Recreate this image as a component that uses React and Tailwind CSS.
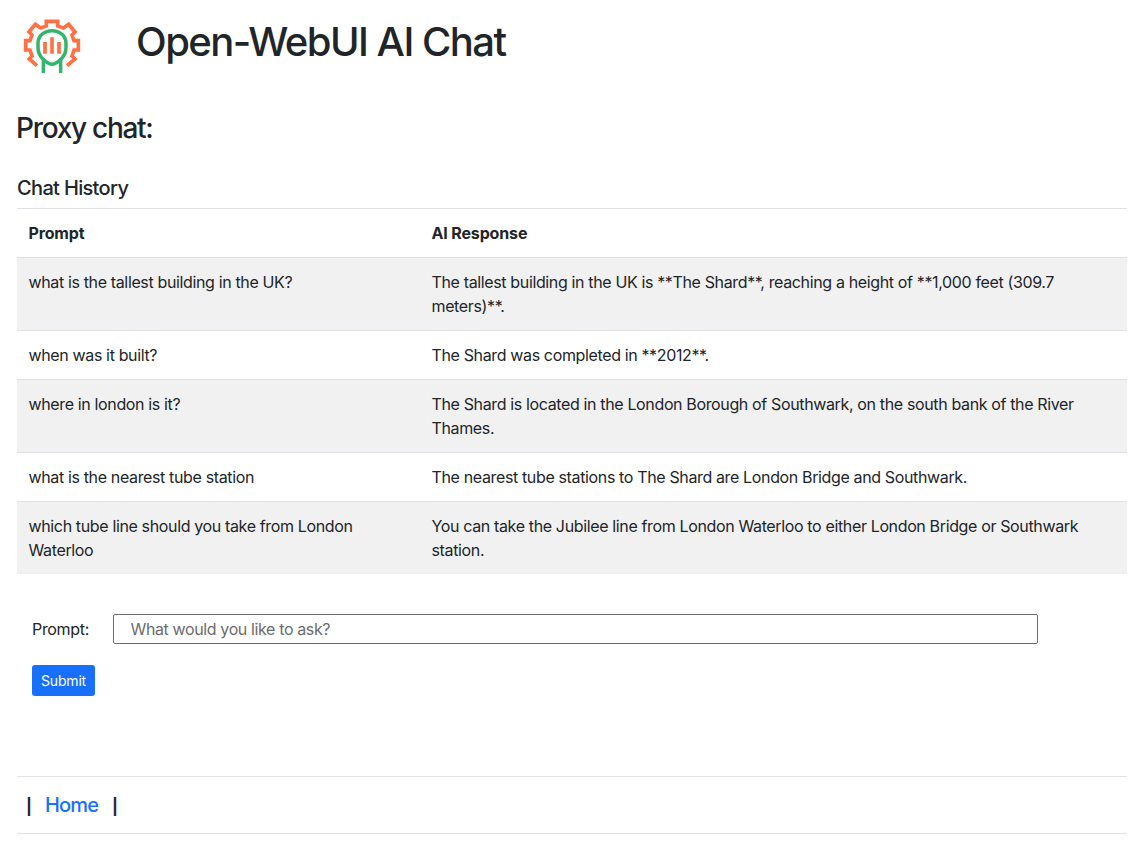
const rows = [
  ['what is the tallest building in the UK?', ['The tallest building in the UK is **The Shard**, reaching a height of **1,000 feet (309.7', 'meters)**.']],
  ['when was it built?', ['The Shard was completed in **2012**.']],
  ['where in london is it?', ['The Shard is located in the London Borough of Southwark, on the south bank of the River', 'Thames.']],
  ['what is the nearest tube station', ['The nearest tube stations to The Shard are London Bridge and Southwark.']],
  ['which tube line should you take from London Waterloo', ['You can take the Jubilee line from London Waterloo to either London Bridge or Southwark', 'station.']],
];

function Logo() {
  return (
    <svg className="ml-[3px] h-16 w-16 shrink-0" viewBox="30 12 192 192" fill="none">
      <g stroke="#ff7043" strokeWidth="11">
        <path d="M81 167L58 147L66 138L60 120H47V92H60L66 75L57 66L76 43L92 54L109 48V34H143V48L160 54L176 43L195 66L186 75L192 92H205V120H192L186 138L195 147L171 167" />
        <path d="M105 96V131M126 82V131M147 96V131" />
      </g>
      <path d="M126 62C103 62 84 77 84 99V112C84 122 87 134 95 143C104 152 113 163 126 163C139 163 148 152 157 143C165 134 168 122 168 112V99C168 77 149 62 126 62ZM100 146V189M152 146V189" stroke="#35b46e" strokeWidth="10.500" />
    </svg>
  );
}

export default function App() {
  return (
    <div className="min-h-[853px] bg-white pr-3.5 pl-[17px] font-['Inter',sans-serif] text-base leading-6 tracking-[-0.0225em] text-[#212529]">
      <header className="flex h-[84px] pt-3.5">
        <Logo />
        <h1 className="ml-[52px] pt-1 text-[40px] leading-12 font-medium tracking-[-0.038em] whitespace-nowrap">Open-WebUI AI Chat</h1>
      </header>
      <h2 className="-ml-px pt-[27px] text-[28px] leading-[34px] font-medium tracking-[-0.046em]"><span>Proxy chat:</span></h2>
      <h3 className="pt-[31px] pb-2 text-xl leading-6 font-medium tracking-[-0.033em]"><span>Chat History</span></h3>
      <table className="w-full table-fixed border-collapse border-t border-[#dee2e6]">
        <colgroup>
          <col className="w-[403px]" />
          <col />
        </colgroup>
        <thead>
          <tr className="border-b border-[#dee2e6] text-left">
            <th className="px-[11.5px] py-3 font-bold tracking-[-0.009em]"><span>Prompt</span></th>
            <th className="px-[11.5px] py-3 font-bold tracking-[-0.009em]"><span>AI Response</span></th>
          </tr>
        </thead>
        <tbody>
          {rows.map(([prompt, lines]) => (
            <tr key={prompt} className="border-b border-[#dee2e6] align-top last:border-b-0 odd:bg-[#f1f1f1]">
              <td className="px-[11.5px] py-3"><span>{prompt}</span></td>
              <td className="px-[11.5px] py-3">
                {lines.map((line) => <span key={line} className="block w-max">{line}</span>)}
              </td>
            </tr>
          ))}
        </tbody>
      </table>
      <form className="pt-10 pl-[15px]" onSubmit={(e) => e.preventDefault()}>
        <div className="flex items-center">
          <label htmlFor="prompt" className="w-[81px] tracking-[-0.02em]">Prompt:</label>
          <input id="prompt" placeholder="What would you like to ask?" className="h-[30px] w-[925px] rounded-[2px] border border-[#6c6c6c] px-[16.5px] tracking-[-0.0235em] placeholder:text-[#6c6c6c]" />
        </div>
        <button className="mt-[21px] block h-[31px] w-[63px] rounded-[3px] bg-[#1670fb] text-sm tracking-[-0.012em] text-white">Submit</button>
      </form>
      <footer className="mt-20 flex h-[58px] items-center border-y border-[#e2e3e4] pl-[9px] text-xl font-medium tracking-[-0.04em]">
        <span className="w-[19px] pt-0.5 text-base font-bold">|</span>
        <a href="#home" className="w-[67px] text-[#1670fb]">Home</a>
        <span className="pt-0.5 text-base font-bold">|</span>
      </footer>
    </div>
  );
}
